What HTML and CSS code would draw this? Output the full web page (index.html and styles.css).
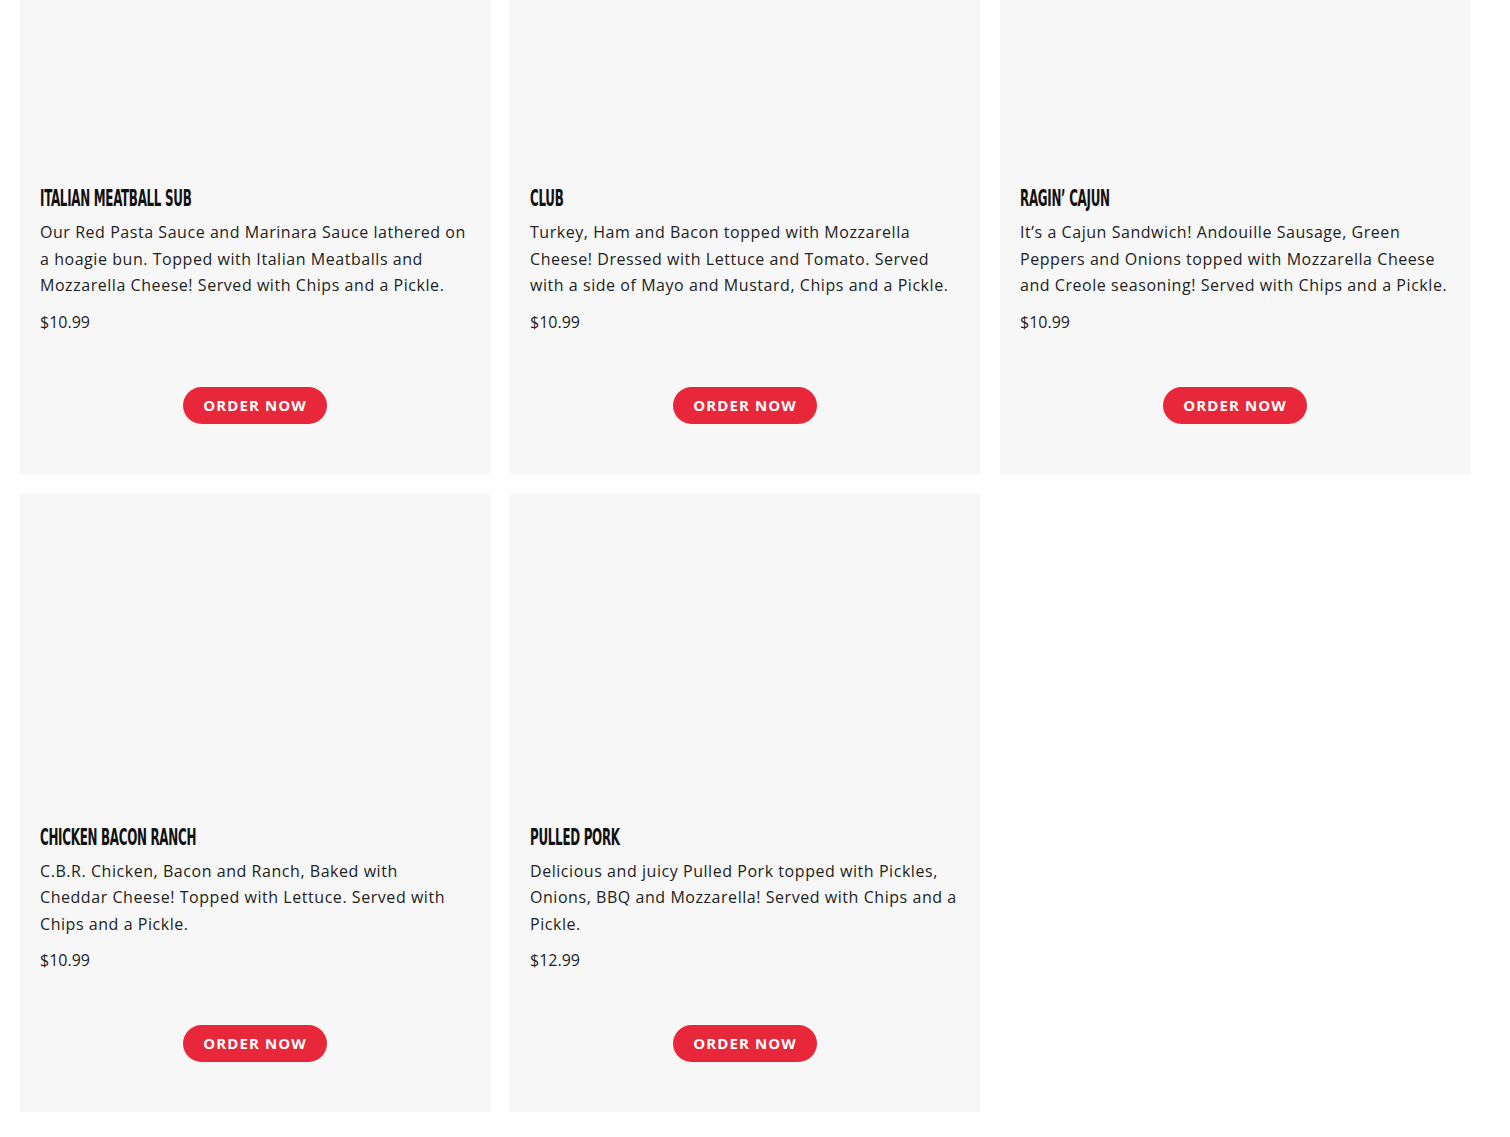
FILE: index.html
```html
<!DOCTYPE html>
<html lang="en">
<head>
<meta charset="utf-8">
<title>Menu</title>
<link rel="stylesheet" href="styles.css">
</head>
<body>
<main class="menu">
  <article class="card">
    <div class="media"></div>
    <h3 class="title"><span>Italian Meatball Sub</span></h3>
    <p class="desc">Our Red Pasta Sauce and Marinara Sauce lathered on a hoagie bun. Topped with Italian Meatballs and Mozzarella Cheese! Served with Chips and a Pickle.</p>
    <p class="price">$10.99</p>
    <a class="btn" href="#">Order Now</a>
  </article>
  <article class="card">
    <div class="media"></div>
    <h3 class="title"><span>Club</span></h3>
    <p class="desc">Turkey, Ham and Bacon topped with Mozzarella Cheese! Dressed with Lettuce and Tomato. Served with a side of Mayo and Mustard, Chips and a Pickle.</p>
    <p class="price">$10.99</p>
    <a class="btn" href="#">Order Now</a>
  </article>
  <article class="card">
    <div class="media"></div>
    <h3 class="title"><span>Ragin’ Cajun</span></h3>
    <p class="desc">It’s a Cajun Sandwich! Andouille Sausage, Green Peppers and Onions topped with Mozzarella Cheese and Creole seasoning! Served with Chips and a Pickle.</p>
    <p class="price">$10.99</p>
    <a class="btn" href="#">Order Now</a>
  </article>
  <article class="card">
    <div class="media"></div>
    <h3 class="title"><span>Chicken Bacon Ranch</span></h3>
    <p class="desc">C.B.R. Chicken, Bacon and Ranch, Baked with Cheddar Cheese! Topped with Lettuce. Served with Chips and a Pickle.</p>
    <p class="price">$10.99</p>
    <a class="btn" href="#">Order Now</a>
  </article>
  <article class="card">
    <div class="media"></div>
    <h3 class="title"><span>Pulled Pork</span></h3>
    <p class="desc">Delicious and juicy Pulled Pork topped with Pickles, Onions, BBQ and Mozzarella! Served with Chips and a Pickle.</p>
    <p class="price">$12.99</p>
    <a class="btn" href="#">Order Now</a>
  </article>
</main>
</body>
</html>
```

FILE: styles.css
```css
html, body {
  margin: 0;
  padding: 0;
  background: #ffffff;
}

body {
  font-family: "Open Sans", "Noto Sans", "DejaVu Sans", sans-serif;
  color: #222222;
}

.menu {
  display: grid;
  grid-template-columns: repeat(3, 470px);
  column-gap: 20px;
  row-gap: 20px;
  padding: 0 20px;
  margin-top: -145px;
}

.card {
  background: #f7f7f7;
  box-shadow: 0 0 3px rgba(0, 0, 0, 0.04);
  padding: 0 20px 50px;
  display: flex;
  flex-direction: column;
}

.media {
  height: 330px;
}

.title {
  margin: 0;
  height: 26px;
  line-height: 26px;
  font-family: "DejaVu Sans Condensed", "DejaVu Sans", sans-serif;
  font-stretch: condensed;
  font-weight: 700;
  font-size: 23px;
  text-transform: uppercase;
  color: #111111;
  white-space: nowrap;
}

.title span {
  display: inline-block;
  transform: scaleX(0.575);
  transform-origin: left center;
  letter-spacing: -0.5px;
}

.desc {
  margin: 8px 0 0;
  font-size: 16px;
  line-height: 26.5px;
  letter-spacing: 0.55px;
}

.price {
  margin: 10px 0 0;
  font-size: 16px;
  line-height: 26px;
}

.btn {
  align-self: center;
  margin-top: 52px;
  height: 37px;
  line-height: 37px;
  padding: 0 20px;
  border-radius: 19px;
  background: #e8283a;
  color: #ffffff;
  text-decoration: none;
  text-transform: uppercase;
  font-weight: 700;
  font-size: 15px;
  letter-spacing: 1.1px;
}
```
